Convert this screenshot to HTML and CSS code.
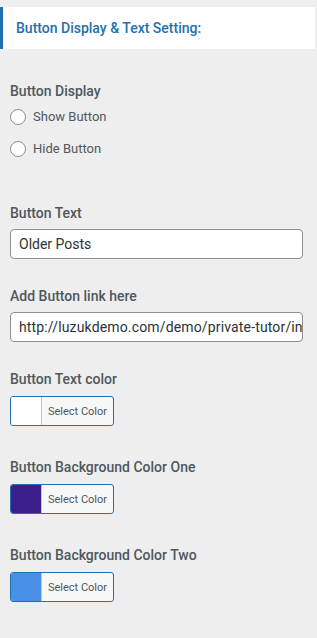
FILE: index.html
```html
<!DOCTYPE html>
<html lang="en">
<head>
  <meta charset="utf-8">
  <title>Button Display &amp; Text Setting</title>
  <link rel="stylesheet" href="styles.css">
</head>
<body>

  <div class="panel-header">Button Display &amp; Text Setting:</div>

  <div class="panel-body">
    <div class="field field-radio">
      <div class="field-label">Button Display</div>
      <label class="radio-row"><span class="radio"></span>Show Button</label>
      <label class="radio-row"><span class="radio"></span>Hide Button</label>
    </div>

    <div class="field field-text">
      <div class="field-label">Button Text</div>
      <div class="text-input">Older Posts</div>
    </div>

    <div class="field field-text">
      <div class="field-label">Add Button link here</div>
      <div class="text-input text-url">http://luzukdemo.com/demo/private-tutor/index.php</div>
    </div>

    <div class="field field-color">
      <div class="field-label">Button Text color</div>
      <div class="color-button">
        <span class="swatch swatch-white"></span>
        <span class="color-text">Select Color</span>
      </div>
    </div>

    <div class="field field-color">
      <div class="field-label">Button Background Color One</div>
      <div class="color-button">
        <span class="swatch swatch-purple"></span>
        <span class="color-text">Select Color</span>
      </div>
    </div>

    <div class="field field-color">
      <div class="field-label">Button Background Color Two</div>
      <div class="color-button">
        <span class="swatch swatch-blue"></span>
        <span class="color-text">Select Color</span>
      </div>
    </div>
  </div>

</body>
</html>
```

FILE: styles.css
```css
body {
  margin: 0;
  background: #eeeeee;
  font-family: Roboto, "Noto Sans", sans-serif;
  color: #50575e;
}

.panel-header {
  margin: 7px 2px 0 0;
  height: 42px;
  background: #fff;
  border-left: 3px solid #2271b1;
  padding-left: 13px;
  display: flex;
  align-items: center;
  font-size: 14px;
  font-weight: 500;
  color: #2271b1;
}

.panel-body {
  padding: 32px 14px 0 10px;
  display: flex;
  flex-direction: column;
}

.field {
  display: flex;
  flex-direction: column;
}

.field-label {
  font-size: 14px;
  font-weight: 500;
  line-height: 20px;
  color: #50575e;
}

.field-radio {
  gap: 12px;
  margin-bottom: 44px;
}

.field-radio .field-label {
  margin-bottom: -6px;
}

.radio-row {
  display: flex;
  align-items: center;
  gap: 7px;
  font-size: 13px;
  line-height: 20px;
  color: #50575e;
}

.radio {
  width: 14px;
  height: 14px;
  border: 1px solid #8c8f94;
  border-radius: 50%;
  background: #fff;
}

.field-text {
  gap: 6px;
  margin-bottom: 27px;
}

.text-input {
  height: 28px;
  border: 1px solid #8c8f94;
  border-radius: 4px;
  background: #fff;
  padding: 0 8px;
  display: flex;
  align-items: center;
  font-size: 14px;
  color: #2c3338;
  white-space: nowrap;
  overflow: hidden;
}

.text-url {
  letter-spacing: 0.15px;
}

.field-color {
  gap: 7px;
  margin-bottom: 31px;
}

.color-button {
  width: 102px;
  height: 28px;
  border: 1px solid #2271b1;
  border-radius: 3px;
  background: #f6f7f7;
  display: flex;
  overflow: hidden;
}

.swatch {
  width: 30px;
  border-right: 1px solid #c3c4c7;
}

.swatch-white { background: #fff; }
.swatch-purple { background: #3c1f8d; }
.swatch-blue { background: #4a8fe8; }

.color-text {
  flex: 1;
  display: flex;
  align-items: center;
  justify-content: center;
  font-size: 11px;
  color: #50575e;
}
```
